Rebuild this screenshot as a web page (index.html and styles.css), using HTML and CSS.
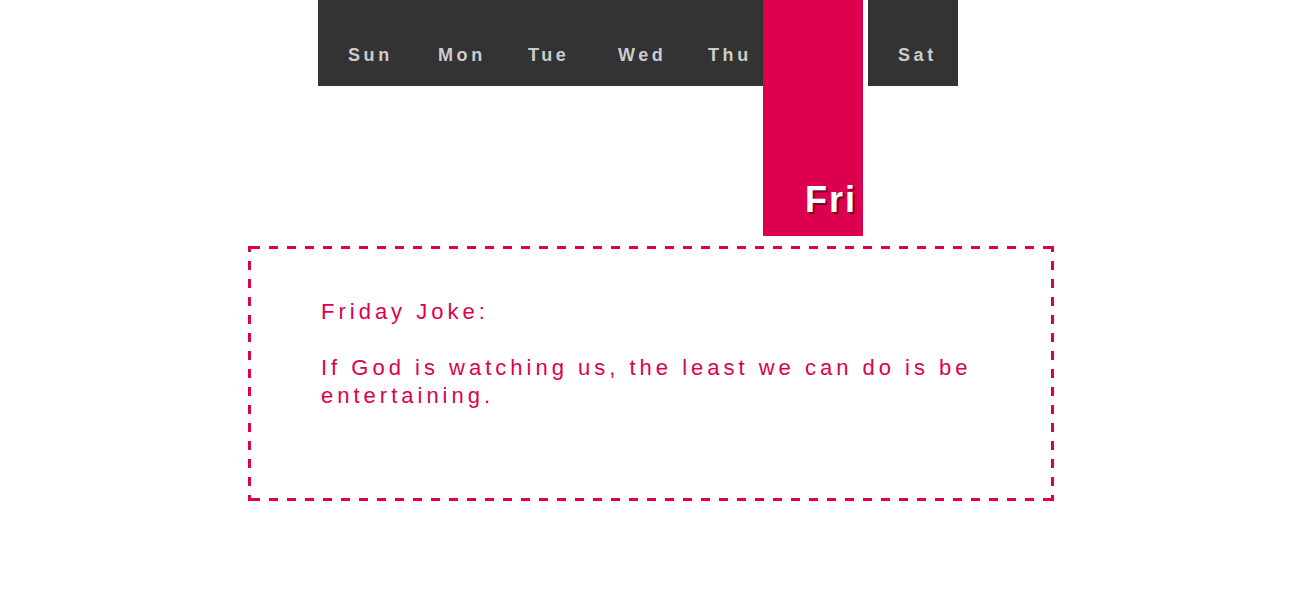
FILE: index.html
```html
<!DOCTYPE html>
<html lang="en">
<head>
<meta charset="utf-8">
<title>Friday Joke</title>
<link rel="stylesheet" href="styles.css">
</head>
<body>
<nav class="week">
  <div class="day">Sun</div>
  <div class="day">Mon</div>
  <div class="day">Tue</div>
  <div class="day">Wed</div>
  <div class="day">Thu</div>
  <div class="day day--active">Fri</div>
  <div class="day">Sat</div>
</nav>
<section class="joke">
  <p class="joke__title">Friday Joke:</p>
  <p class="joke__text">If God is watching us, the least we can do is be entertaining.</p>
</section>
</body>
</html>
```
FILE: styles.css
```css
html, body {
  margin: 0;
  padding: 0;
  background: #ffffff;
}

body {
  font-family: "Liberation Sans", Arial, sans-serif;
}

.week {
  display: flex;
  align-items: flex-start;
  margin-left: 318px;
}

.day {
  width: 90px;
  height: 86px;
  box-sizing: border-box;
  padding: 44px 0 0 30px;
  background: #333333;
  color: #cccccc;
  font-size: 18px;
  font-weight: bold;
  line-height: 22px;
  letter-spacing: 3.6px;
}

.day--active {
  position: relative;
  width: 100px;
  height: 236px;
  margin-left: -5px;
  margin-right: 5px;
  padding: 180px 6px 0 0;
  background: #dd004f;
  color: #ffffff;
  font-size: 36px;
  line-height: 40px;
  letter-spacing: 2px;
  text-align: right;
  text-shadow: 2px 2px 1px rgba(0, 0, 0, 0.45);
}

.joke {
  box-sizing: border-box;
  width: 806px;
  height: 255px;
  margin: 10px 0 0 248px;
  padding: 49px 70px 0 70px;
  border: 3px solid transparent;
  background-origin: border-box;
  background-clip: border-box;
  background-repeat: no-repeat;
  background-image:
    repeating-linear-gradient(to right, transparent 0 3px, #dd004f 3px 12px, transparent 12px 18px),
    repeating-linear-gradient(to right, transparent 0 3px, #dd004f 3px 12px, transparent 12px 18px),
    repeating-linear-gradient(to bottom, #dd004f 0 6px, transparent 6px 15px, #dd004f 15px 18px),
    repeating-linear-gradient(to bottom, #dd004f 0 6px, transparent 6px 15px, #dd004f 15px 18px);
  background-size: 100% 3px, 100% 3px, 3px 100%, 3px 100%;
  background-position: left top, left bottom, left top, right top;
  color: #dd004f;
  font-size: 22px;
  line-height: 28px;
  letter-spacing: 4px;
}

.joke p {
  margin: 0;
}

.joke__title {
  margin-bottom: 28px !important;
}
```
